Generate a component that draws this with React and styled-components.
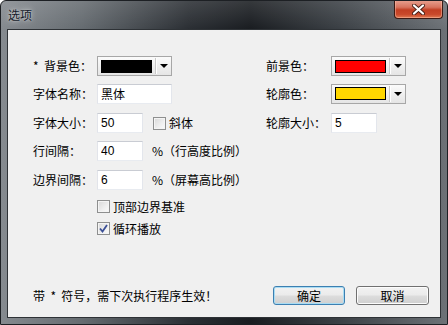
import React from 'react'
import styled, { createGlobalStyle } from 'styled-components'

const GlobalStyle = createGlobalStyle`
  html, body { margin: 0; padding: 0; background: #ffffff; }
  body {
    font-family: "Liberation Sans", "Noto Sans CJK SC", sans-serif;
    font-size: 12px;
    color: #000;
  }
`

const Window = styled.div`
  width: 448px;
  height: 325px;
  box-sizing: border-box;
  border: 1px solid #1d2024;
  border-radius: 6px 6px 0 0;
  background:
    linear-gradient(180deg, rgba(255,255,255,0.12) 0px, rgba(255,255,255,0) 28px),
    linear-gradient(90deg, #858a8f 0%, #666c71 18%, #2b2f34 42%, #1a1d21 56%, #3b4045 76%, #6d7277 100%);
  display: flex;
  flex-direction: column;
  padding: 0 6px 6px 6px;
  overflow: hidden;
`

const TitleBar = styled.div`
  height: 28px;
  margin: 0 -6px;
  padding: 0 4px 0 7px;
  display: flex;
  align-items: flex-start;
  justify-content: space-between;
`

const Title = styled.div`
  font-family: "Noto Sans CJK SC", sans-serif;
  font-size: 12px;
  line-height: 14px;
  margin-top: 7px;
  color: #141a2a;
  text-shadow: 0 0 6px rgba(255,255,255,0.7), 0 0 2px rgba(255,255,255,0.5);
`

const CloseButton = styled.div`
  width: 47px;
  height: 18px;
  margin-top: -1px;
  border: 1px solid #3b1a14;
  border-top: none;
  border-radius: 0 0 4px 4px;
  background: linear-gradient(180deg, #e9a392 0%, #d7745f 40%, #c23f23 55%, #c9492b 80%, #e07a52 100%);
  box-shadow: inset 0 0 0 1px rgba(255,200,180,0.45);
  display: flex;
  align-items: center;
  justify-content: center;
`

const Client = styled.div`
  flex: 1;
  border: 1px solid #2e3236;
  background: #f0f0f0;
  display: flex;
  flex-direction: column;
  padding: 26px 11px 12px 25px;
`

const Row = styled.div`
  display: grid;
  grid-template-columns: 233px 1fr;
  height: ${p => p.h}px;
  margin-top: ${p => p.mt || 0}px;
`

const Field = styled.div`
  display: flex;
  align-items: center;
  padding-left: ${p => p.indent || 0}px;
`

const Label = styled.span`
  width: ${p => p.w || 64}px;
  flex-shrink: 0;
  white-space: pre;
  font-family: "Noto Sans CJK SC", sans-serif;
  font-size: 12px;
  line-height: 14px;
`

const Text = styled.span`
  white-space: pre;
  font-family: "Noto Sans CJK SC", sans-serif;
  font-size: 12px;
  line-height: 14px;
  margin-left: ${p => p.ml || 0}px;
`

const Combo = styled.div`
  width: 75px;
  height: 20px;
  box-sizing: border-box;
  border: 1px solid #a7a7a7;
  background: linear-gradient(180deg, #fbfbfb 0%, #f0f0f0 50%, #e5e5e5 100%);
  display: flex;
  align-items: center;
  padding: 0 0 0 3px;
`

const Swatch = styled.div`
  width: 51px;
  height: 13px;
  box-sizing: border-box;
  border: 1px solid #000;
  background: ${p => p.color};
`

const ComboDivider = styled.div`
  width: 1px;
  height: 16px;
  margin-left: 3px;
  background: #c9c9c9;
  box-shadow: 1px 0 0 #ffffff;
`

const ComboArrow = styled.div`
  flex: 1;
  display: flex;
  align-items: center;
  justify-content: center;
  &::after {
    content: "";
    border-left: 4px solid transparent;
    border-right: 4px solid transparent;
    border-top: 4px solid #000;
  }
`

const Input = styled.input`
  width: ${p => p.w}px;
  height: 20px;
  box-sizing: border-box;
  border: 1px solid;
  border-color: #c9ccd3 #e3e6ec #e8ebf0 #e2e4ea;
  background: #ffffff;
  padding: 0 3px;
  margin: 0;
  font-family: "Liberation Sans", "Noto Sans CJK SC", sans-serif;
  font-size: 12px;
  color: #000;
  outline: none;
`

const Box = styled.span`
  width: 13px;
  height: 13px;
  box-sizing: border-box;
  flex-shrink: 0;
  border: 1px solid #8e8f8f;
  background: linear-gradient(135deg, #d8d8d8 0%, #efefef 60%, #fbfbfb 100%);
  box-shadow: inset 0 0 0 1px #f4f4f4;
  display: flex;
  align-items: center;
  justify-content: center;
  margin-left: ${p => p.ml || 0}px;
`

const Footer = styled.div`
  margin-top: auto;
  display: flex;
  align-items: center;
  height: 19px;
`

const Spacer = styled.div`
  flex: 1;
`

const Button = styled.button`
  width: ${p => p.w}px;
  height: 19px;
  box-sizing: border-box;
  margin: 0 0 0 ${p => p.ml || 0}px;
  padding: 0;
  border: 1px solid ${p => (p.primary ? '#3c7fb1' : '#707070')};
  border-radius: 3px;
  background: linear-gradient(180deg, #f2f2f2 0%, #ebebeb 48%, #dddddd 52%, #cfcfcf 100%);
  box-shadow: inset 0 0 0 1px ${p => (p.primary ? '#a9dcf3' : '#fcfcfc')};
  font-family: "Noto Sans CJK SC", sans-serif;
  font-size: 12px;
  line-height: 14px;
  color: #000;
`

const CheckBox = ({ checked, ml }) => (
  <Box ml={ml}>
    {checked && (
      <svg width="9" height="9" viewBox="0 0 9 9">
        <path d="M1 4.5 L3.5 7.5 L8 1" fill="none" stroke="#3b4f96" strokeWidth="1.8" />
      </svg>
    )}
  </Box>
)

const ColorPicker = ({ color }) => (
  <Combo>
    <Swatch color={color} />
    <ComboDivider />
    <ComboArrow />
  </Combo>
)

export default function App() {
  return (
    <>
      <GlobalStyle />
      <Window>
        <TitleBar>
          <Title>选项</Title>
          <CloseButton>
            <svg width="13" height="11" viewBox="0 0 13 11">
              <path d="M2 1.5 L11 9.5 M11 1.5 L2 9.5" stroke="#4a2118" strokeWidth="4" strokeLinecap="round" />
              <path d="M2 1.5 L11 9.5 M11 1.5 L2 9.5" stroke="#ffffff" strokeWidth="2.2" strokeLinecap="round" />
            </svg>
          </CloseButton>
        </TitleBar>
        <Client>
          <Row h={20}>
            <Field>
              <Label>*  背景色：</Label>
              <ColorPicker color="#000000" />
            </Field>
            <Field>
              <Label w={65}>前景色：</Label>
              <ColorPicker color="#ff0000" />
            </Field>
          </Row>
          <Row h={21} mt={7}>
            <Field>
              <Label>字体名称：</Label>
              <Input w={75} defaultValue="黑体" />
            </Field>
            <Field>
              <Label w={65}>轮廓色：</Label>
              <ColorPicker color="#ffd700" />
            </Field>
          </Row>
          <Row h={20} mt={9}>
            <Field>
              <Label>字体大小：</Label>
              <Input w={46} defaultValue="50" />
              <CheckBox ml={10} />
              <Text ml={3}>斜体</Text>
            </Field>
            <Field>
              <Label w={65}>轮廓大小：</Label>
              <Input w={46} defaultValue="5" />
            </Field>
          </Row>
          <Row h={20} mt={8}>
            <Field>
              <Label>行间隔：</Label>
              <Input w={46} defaultValue="40" />
              <Text ml={9}>%（行高度比例）</Text>
            </Field>
          </Row>
          <Row h={20} mt={9}>
            <Field>
              <Label>边界间隔：</Label>
              <Input w={46} defaultValue="6" />
              <Text ml={9}>%（屏幕高比例）</Text>
            </Field>
          </Row>
          <Row h={17} mt={8}>
            <Field indent={64}>
              <CheckBox />
              <Text ml={3}>顶部边界基准</Text>
            </Field>
          </Row>
          <Row h={17} mt={5}>
            <Field indent={64}>
              <CheckBox checked />
              <Text ml={3}>循环播放</Text>
            </Field>
          </Row>
          <Footer>
            <Text>带  *  符号，需下次执行程序生效！</Text>
            <Spacer />
            <Button primary w={72}>确定</Button>
            <Button w={73} ml={11}>取消</Button>
          </Footer>
        </Client>
      </Window>
    </>
  )
}
